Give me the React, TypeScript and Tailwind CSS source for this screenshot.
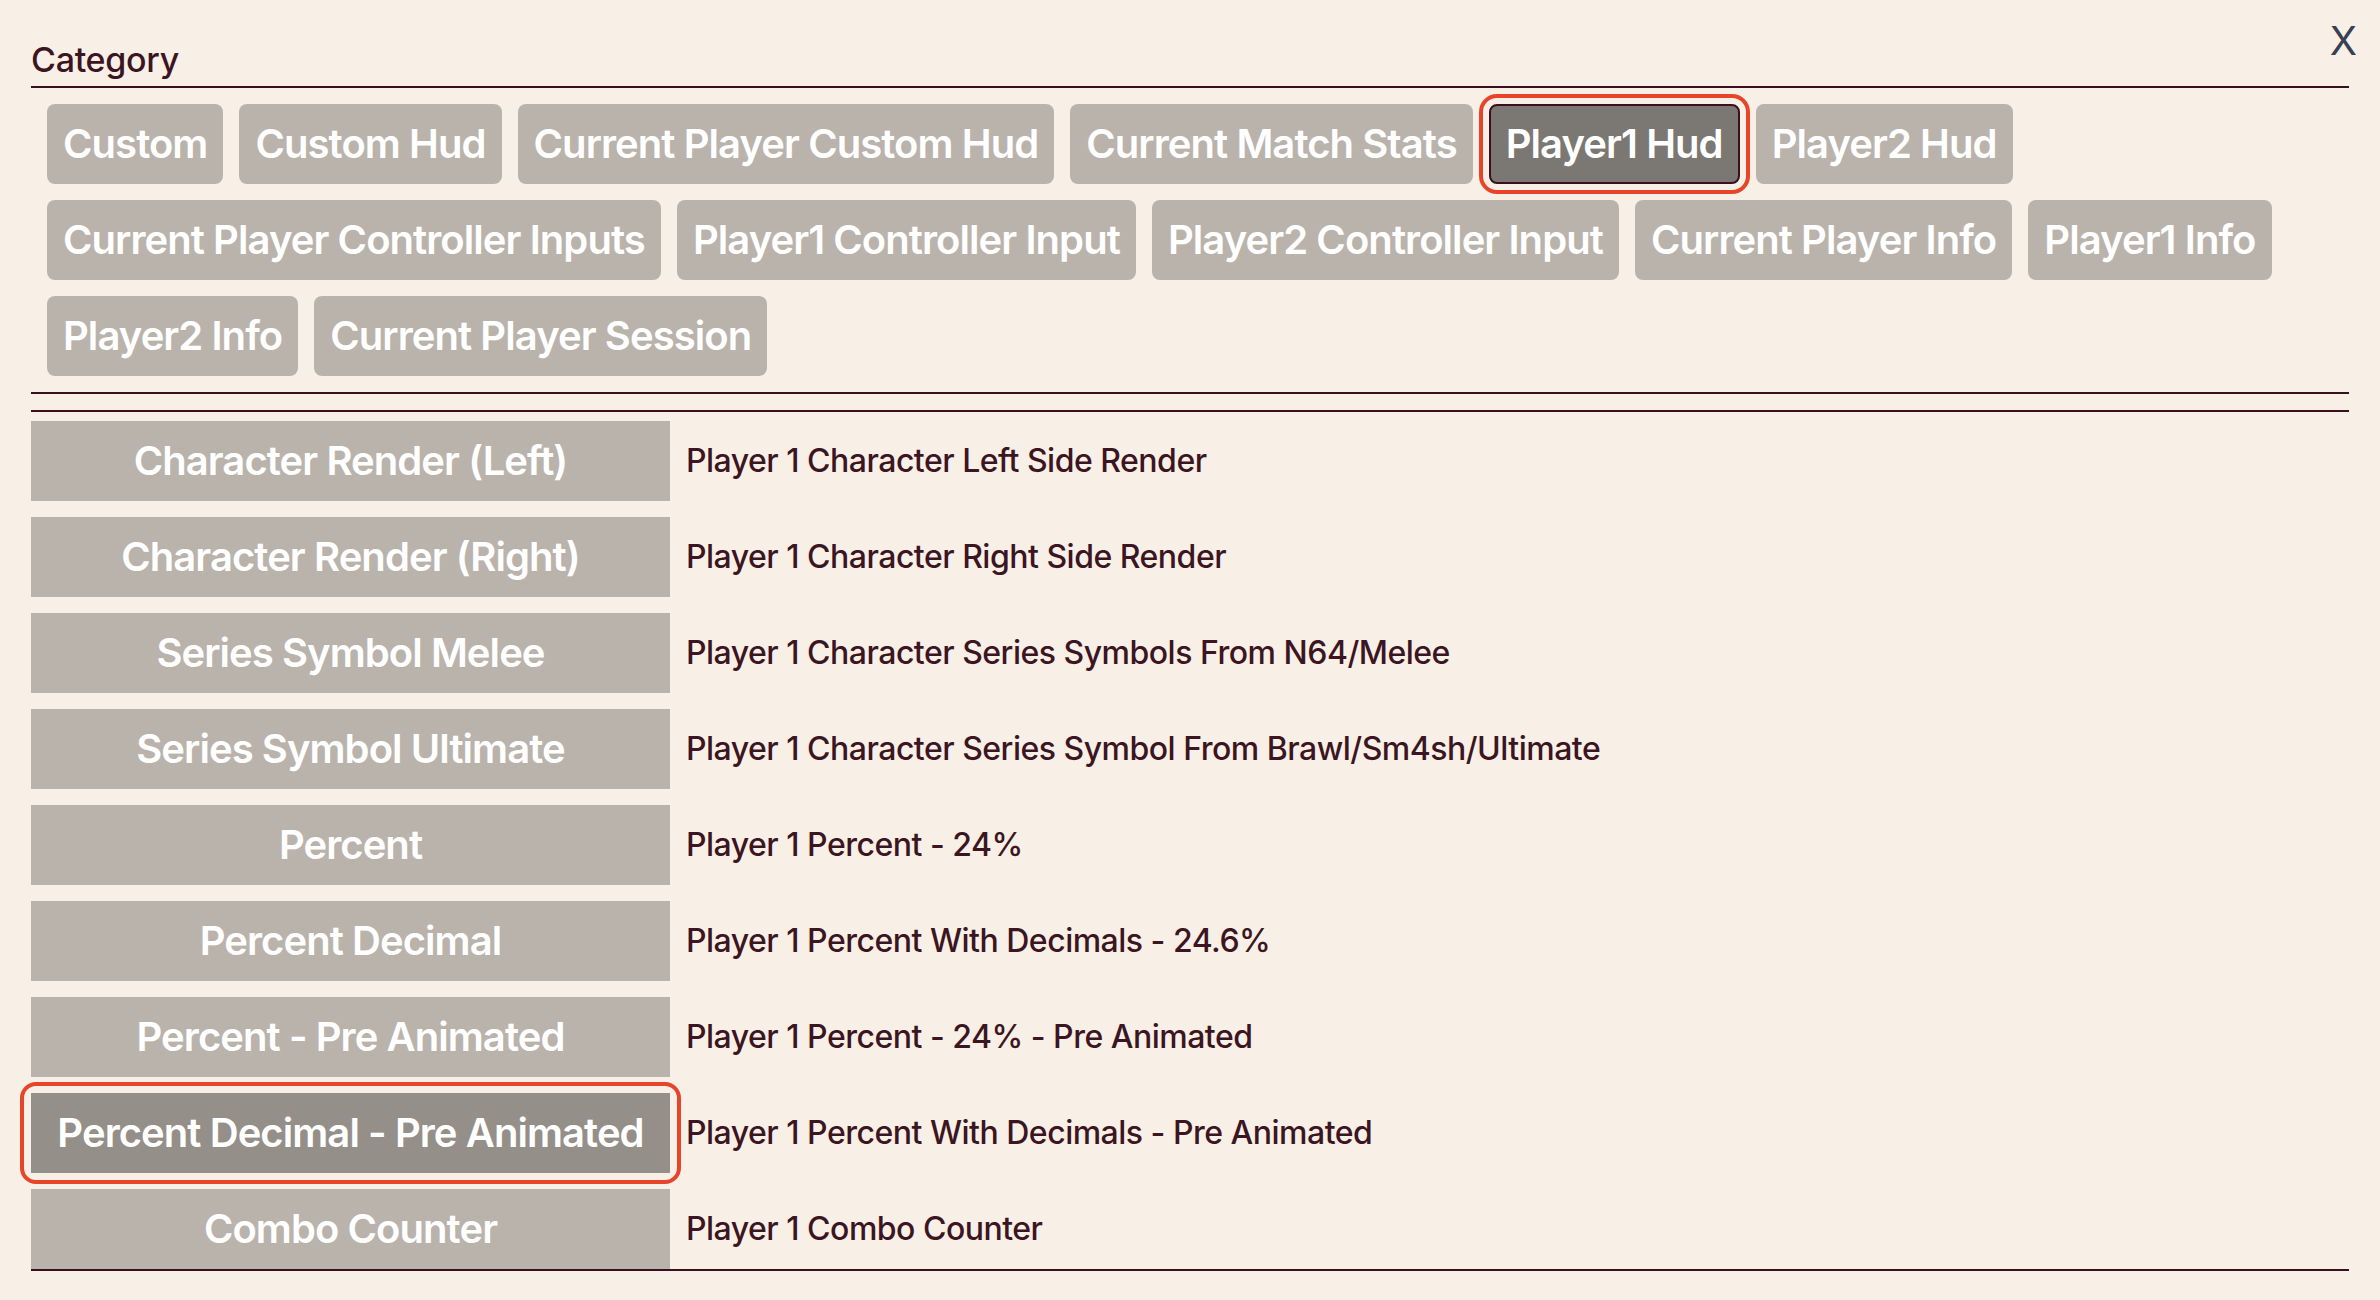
import { useState } from "react";

const categories = [
  "Custom",
  "Custom Hud",
  "Current Player Custom Hud",
  "Current Match Stats",
  "Player1 Hud",
  "Player2 Hud",
  "Current Player Controller Inputs",
  "Player1 Controller Input",
  "Player2 Controller Input",
  "Current Player Info",
  "Player1 Info",
  "Player2 Info",
  "Current Player Session",
];

const sources: { name: string; desc: string }[] = [
  { name: "Character Render (Left)", desc: "Player 1 Character Left Side Render" },
  { name: "Character Render (Right)", desc: "Player 1 Character Right Side Render" },
  { name: "Series Symbol Melee", desc: "Player 1 Character Series Symbols From N64/Melee" },
  { name: "Series Symbol Ultimate", desc: "Player 1 Character Series Symbol From Brawl/Sm4sh/Ultimate" },
  { name: "Percent", desc: "Player 1 Percent - 24%" },
  { name: "Percent Decimal", desc: "Player 1 Percent With Decimals - 24.6%" },
  { name: "Percent - Pre Animated", desc: "Player 1 Percent - 24% - Pre Animated" },
  { name: "Percent Decimal - Pre Animated", desc: "Player 1 Percent With Decimals - Pre Animated" },
  { name: "Combo Counter", desc: "Player 1 Combo Counter" },
];

export default function App() {
  const [category, setCategory] = useState("Player1 Hud");
  const [source, setSource] = useState("Percent Decimal - Pre Animated");

  return (
    <div className="min-h-screen bg-[#f8f0e6] px-[31px] font-['Inter',sans-serif] text-[#3c1522]">
      {/* Header */}
      <div className="relative border-b-2 border-[#3a1020] pt-[39px] pb-[6px]">
        <h2 className="text-[34px] leading-[41px] font-medium tracking-[-0.3px]">Category</h2>
        <button className="absolute top-[17px] -right-[8px] text-[40px] leading-[48px] text-[#374151]">
          X
        </button>
      </div>

      {/* Category buttons */}
      <div className="flex flex-wrap gap-4 border-b-2 border-[#3a1020] pt-4 pb-4 pl-4">
        {categories.map((c) => {
          const active = c === category;
          return (
            <div key={c} className="relative">
              <button
                onClick={() => setCategory(c)}
                className={
                  active
                    ? "flex h-20 items-center rounded-lg border-2 border-[#3a1020] bg-[#7b7772] px-[15px] text-[40px] font-semibold tracking-[-0.93px] text-white"
                    : "flex h-20 items-center rounded-lg bg-[#bab3ac] px-4 text-[40px] font-semibold tracking-[-0.93px] text-white"
                }
              >
                {c}
              </button>
              {active && (
                <div className="pointer-events-none absolute -inset-[10px] rounded-[18px] border-4 border-[#e8442a]" />
              )}
            </div>
          );
        })}
      </div>

      {/* Source list */}
      <div className="mt-4 flex flex-col gap-4 border-t-2 border-b-2 border-[#3a1020] pt-[9px]">
        {sources.map((s) => {
          const active = s.name === source;
          return (
            <div key={s.name} className="flex items-center">
              <div className="relative">
                <button
                  onClick={() => setSource(s.name)}
                  className={
                    "flex h-20 w-[639px] items-center justify-center text-[40px] font-semibold tracking-[-0.93px] text-white " +
                    (active ? "bg-[#958f89]" : "bg-[#bab3ac]")
                  }
                >
                  {s.name}
                </button>
                {active && (
                  <div className="pointer-events-none absolute -inset-[11px] rounded-[16px] border-4 border-[#e8442a]" />
                )}
              </div>
              <span className="pl-4 text-[32px] font-medium tracking-[-0.5px]">{s.desc}</span>
            </div>
          );
        })}
      </div>
    </div>
  );
}
